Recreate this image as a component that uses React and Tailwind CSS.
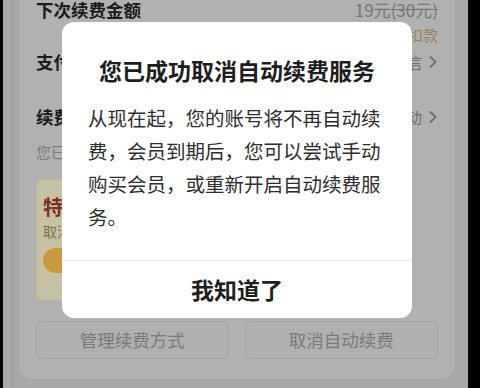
import React from 'react';

const font = { fontFamily: '"Noto Sans CJK SC", "Noto Sans", sans-serif' };

function Row({ left, right, className = '' }) {
    return (
        <div className={`flex items-center justify-between h-[24px] ${className}`}>
            <span className="text-[17.5px] font-bold text-[#1b1b1b]">{left}</span>
            <span className="flex items-center gap-[6px] text-[16px] text-[#6f6f6f]">
                {right}
                <svg width="10" height="14" viewBox="0 0 10 14" fill="none">
                    <path d="M2.5 2 L7.5 7 L2.5 12" stroke="#6f6f6f" strokeWidth="1.8" strokeLinecap="round" strokeLinejoin="round" />
                </svg>
            </span>
        </div>
    );
}

export default function App() {
    return (
        <div className="relative w-[480px] h-[388px] overflow-hidden bg-black flex" style={font}>
            {/* page behind the dialog, already dimmed */}
            <div className="ml-[3px] w-[465px] h-full bg-[#a9a9a9] flex">
                <div className="ml-[8px] w-[3px] h-full bg-[#a1a1a1]" />
                <div className="ml-[4px] w-[438px] h-[382px] -mt-[2px] bg-[#b1b1b1] rounded-b-[14px] border-x border-b border-[#a6a6a6] px-[17px] flex flex-col">
                    <div className="flex items-center justify-between h-[24px]">
                        <span className="text-[17.5px] font-bold text-[#1b1b1b]">下次续费金额</span>
                        <span className="text-[17px] text-[#777]">
                            19元<span className="line-through">(30元)</span>
                        </span>
                    </div>
                    <div className="mt-[3px] h-[20px] flex items-center justify-end text-[15px] text-[#9c8458]">
                        自动扣款
                    </div>
                    <Row className="mt-[5px]" left="支付方式" right="微信" />
                    <Row className="mt-[31px]" left="续费提醒" right="已开启自动" />
                    <div className="mt-[13px] h-[20px] flex items-center text-[15px] text-[#7c7c7c]">
                        您已开通自动续费
                    </div>
                    <div className="mt-[17px] w-[340px] h-[121px] rounded-[6px] bg-[#c7c1a4] border border-[#c0b99b] px-[6px] pt-[14px] flex flex-col">
                        <div className="h-[26px] flex items-center text-[20px] font-bold text-[#7c2f1c]">特惠权益</div>
                        <div className="mt-[1px] h-[20px] flex items-center text-[14px] text-[#80704f]">取消后将失去优惠</div>
                        <div className="mt-[7px] w-[130px] h-[25px] rounded-full bg-[#c9993c]" />
                    </div>
                    <div className="mt-[21px] flex gap-[16px]">
                        <div className="w-[193px] h-[38px] rounded-[6px] border border-[#a2a2a2] bg-[#b0b0b0] flex items-center justify-center text-[17.5px] text-[#7a7a7a]">
                            管理续费方式
                        </div>
                        <div className="w-[194px] h-[38px] rounded-[6px] border border-[#a2a2a2] bg-[#b0b0b0] flex items-center justify-center text-[17.5px] text-[#7a7a7a]">
                            取消自动续费
                        </div>
                    </div>
                </div>
            </div>

            {/* dialog */}
            <div className="absolute left-[62px] top-[22px] w-[350px] h-[296px] bg-white rounded-[12px] flex flex-col">
                <div className="px-[26px] pt-[32px]">
                    <div className="h-[32px] flex items-center justify-center text-[23px] font-bold text-[#1e1e1e]">
                        您已成功取消自动续费服务
                    </div>
                    <p className="mt-[15px] text-[19.5px] leading-[33px] text-[#2e2e2e]">
                        从现在起，您的账号将不再自动续费，会员到期后，您可以尝试手动购买会员，或重新开启自动续费服务。
                    </p>
                </div>
                <div className="mt-auto h-[58px] border-t border-[#eeeeee] flex items-center justify-center text-[23px] font-bold text-[#1e1e1e]">
                    我知道了
                </div>
            </div>
        </div>
    );
}
